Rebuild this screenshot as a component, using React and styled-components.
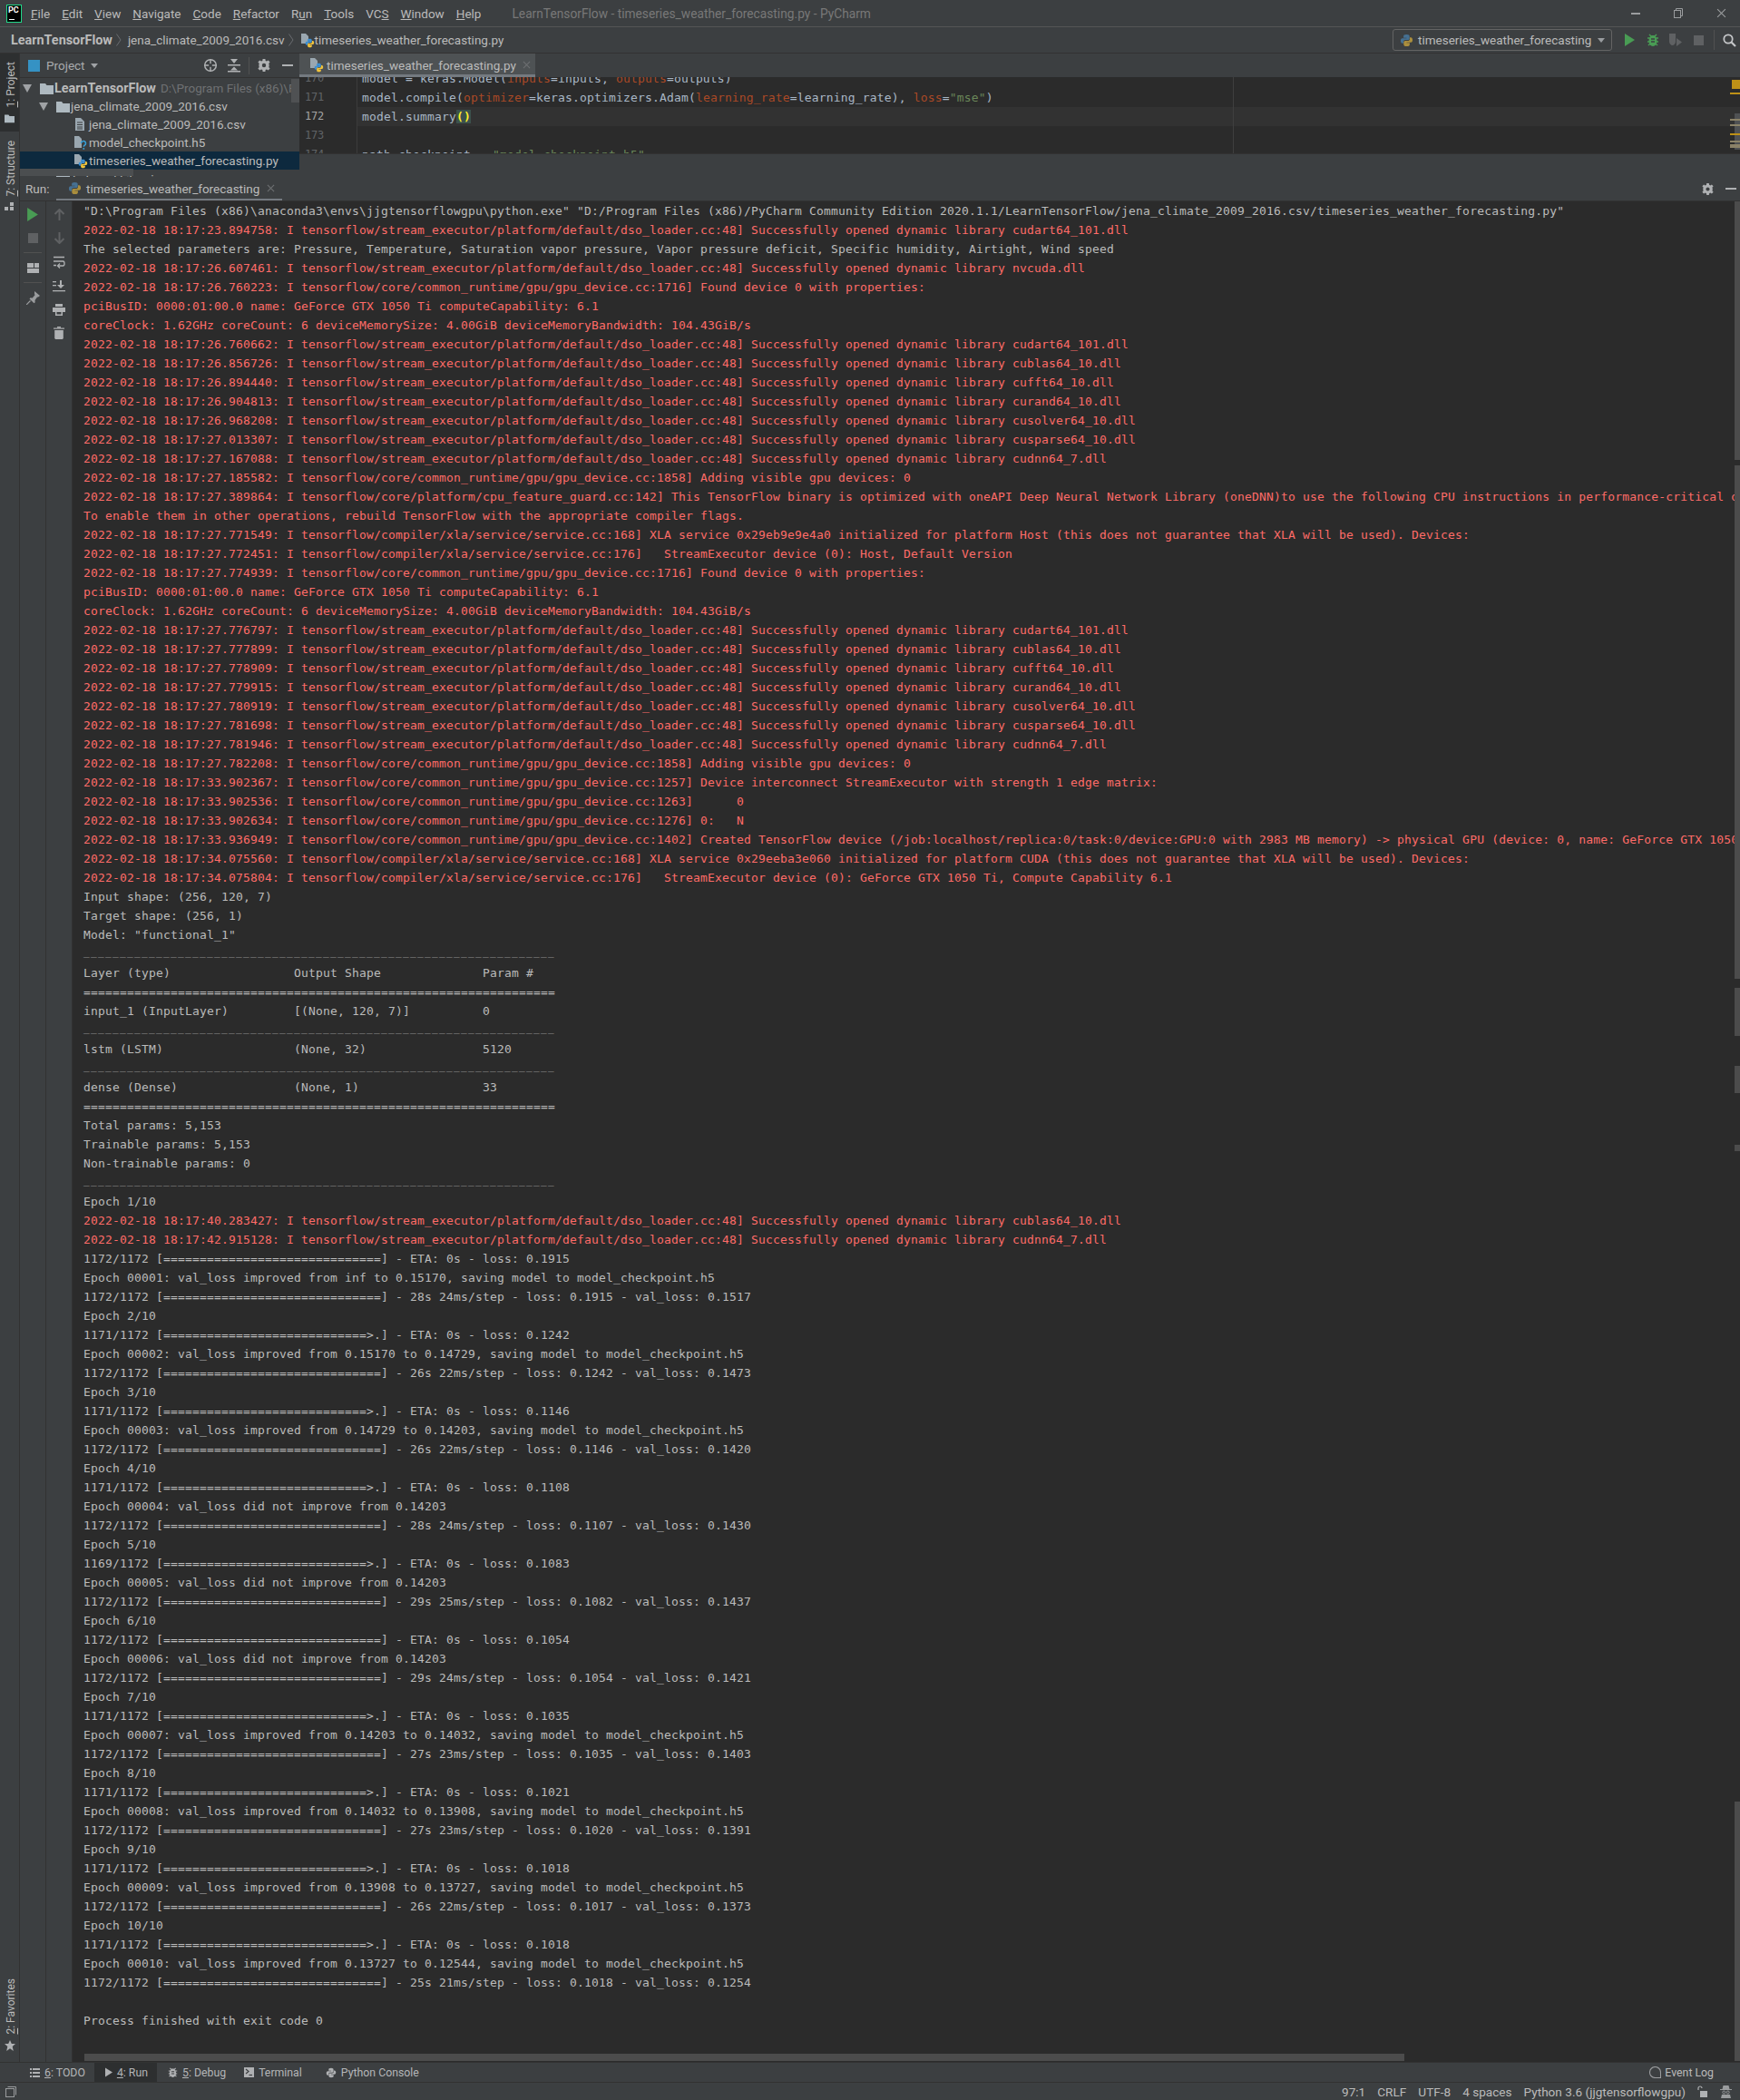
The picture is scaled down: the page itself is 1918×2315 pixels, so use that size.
import React from 'react';
import styled, { createGlobalStyle } from 'styled-components';

const Global = createGlobalStyle`
  html, body { margin: 0; padding: 0; background: #3c3f41; }
  #root { width: 1918px; height: 2315px; }
`;

const UI = `"Roboto", "Noto Sans", sans-serif`;
const MONO = `"DejaVu Sans Mono", "Liberation Mono", monospace`;

const Root = styled.div`
  width: 1918px; height: 2315px; overflow: hidden;
  display: flex; flex-direction: column;
  background: #3c3f41; color: #bbbbbb;
  font-family: ${UI}; font-size: 13px;
`;
const TitleBar = styled.div`
  height: 29px; flex: none; display: flex; align-items: center;
  padding-left: 7px; border-bottom: 1px solid #555555;
`;
const Logo = styled.div`
  height: 18px; flex: none; background: #000; border: 1px solid #21d789;
  color: #fff; font-size: 9px; font-weight: 700; line-height: 10px; padding-left: 1px;
  box-sizing: content-box; position: relative; margin-right: 10px; width: 14px;
  &::after { content: ''; position: absolute; left: 2px; bottom: 2px; width: 6px; height: 1px; background: #fff; }
`;
const Menu = styled.nav`display: flex; gap: 13px; color: #bbbbbb; font-size: 13.5px;`;
const TitleText = styled.div`margin-left: 34px; color: #787878; font-size: 13.75px;`;
const WinButtons = styled.div`margin-left: auto; display: flex; gap: 37px; padding-right: 15px; align-items: center;`;

const NavBar = styled.div`
  height: 28px; flex: none; display: flex; align-items: center; padding-left: 12px;
  border-bottom: 1px solid #323232; font-size: 13.5px;
`;
const Crumb = styled.span`
  font-weight: ${p => (p.$bold ? 700 : 400)}; font-size: ${p => (p.$bold ? '14.4px' : 'inherit')}; white-space: pre;
`;
const CrumbSep = styled.span`color: #6a6d70; margin: 0 7px 0 4px; display: inline-flex;`;
const NavRight = styled.div`margin-left: auto; display: flex; align-items: center; padding-right: 4px;`;
const Combo = styled.div`
  width: 242px; height: 24px; box-sizing: border-box; display: flex; align-items: center;
  gap: 5px; padding: 0 7px; border: 1px solid #646464; border-radius: 3px; margin-right: 6px;
`;
const ComboArrow = styled.span`
  margin-left: auto; width: 0; height: 0; border-left: 4.5px solid transparent;
  border-right: 4.5px solid transparent; border-top: 5px solid #9a9da0;
`;
const NavDivider = styled.span`width: 1px; height: 22px; background: #515151; margin: 0 8px 0 3px;`;
const NavIcon = styled.span`display: inline-flex; width: ${p => p.$w || 26}px; justify-content: center;`;

const Middle = styled.div`flex: 1; min-height: 0; display: flex;`;
const Strip = styled.aside`
  width: 21px; flex: none; border-right: 1px solid #323232; display: flex; flex-direction: column;
  font-size: 12px;
`;
const StripTab = styled.div`
  display: flex; flex-direction: column; align-items: center; gap: ${p => p.$gap || 6}px;
  padding: ${p => p.$pad || '9px 0 0'};
  height: ${p => p.$height || 'auto'}; box-sizing: border-box;
  background: ${p => (p.$active ? '#2d2f30' : 'transparent')};
  margin-top: ${p => p.$mt || '0'};
`;
const StripLabel = styled.span`
  writing-mode: vertical-rl; transform: rotate(180deg); white-space: pre; line-height: 17px; color: #bbbbbb;
  margin-left: 3px;
`;
const Main = styled.div`flex: 1; min-width: 0; display: flex; flex-direction: column;`;
const TopArea = styled.div`height: 136px; flex: none; display: flex;`;

const ProjectPanel = styled.section`width: 308px; flex: none; display: flex; flex-direction: column; overflow: hidden; position: relative;`;
const PanelHeader = styled.div`
  height: 26px; flex: none; display: flex; align-items: center; padding-left: 9px;
  border-bottom: 1px solid #323232; box-sizing: content-box;
`;
const PanelTitle = styled.span`margin: 0 6px 0 7px; font-size: 13.5px; color: #a9abad;`;
const SmallDown = styled.span`
  width: 0; height: 0; border-left: 4px solid transparent; border-right: 4px solid transparent;
  border-top: 5px solid #a0a3a6;
`;
const HeaderIcons = styled.div`margin-left: auto; display: flex; align-items: center; padding-right: 0;`;
const HeaderIcon = styled.span`display: inline-flex; width: ${p => p.$w || 26}px; justify-content: center;`;
const VDivider = styled.span`width: 1px; height: 19px; background: #515151; margin: 0 3px;`;
const Tree = styled.div`flex: 1; padding-top: 1px; position: relative; overflow: hidden;`;
const TreeRow = styled.div`
  height: 20px; display: flex; align-items: center; white-space: pre; overflow: hidden;
  padding-left: ${p => p.$indent}px; background: ${p => (p.$selected ? '#0d293e' : 'transparent')};
  gap: ${p => p.$gap ?? 3}px; font-size: 13.5px;
`;
const Chevron = styled.span`
  width: 0; height: 0; border-left: 5px solid transparent; border-right: 5px solid transparent;
  border-top: 9px solid #9fa2a5; margin-right: 8px; flex: none;
`;
const Dim = styled.span`color: #6f7173; margin-left: 4px;`;
const TreeVScroll = styled.div`position: absolute; right: 0; top: 1px; width: 9px; height: 26px; background: #4f5153;`;
const TreeHScroll = styled.div`position: absolute; left: 0; top: 100px; width: 125px; height: 8px; background: #4b4e50;`;

const EditorPane = styled.section`flex: 1; min-width: 0; display: flex; flex-direction: column;`;
const TabBar = styled.div`height: 26px; flex: none; display: flex;`;
const EditorTab = styled.div`
  width: 260px; height: 26px; box-sizing: border-box; background: #4e5254; border-bottom: 3px solid #747a80;
  display: flex; align-items: center; gap: 3px; padding: 2px 0 0 11px; font-size: 13.5px;
`;
const CloseX = styled.span`color: #6d7072; margin-left: ${p => p.$ml || 4}px; display: inline-flex;`;
const Editor = styled.div`
  height: 84px; flex: none; background: #2b2b2b; border-bottom: 1px solid #323232; overflow: hidden;
  position: relative; font-family: ${MONO}; font-size: 13px; letter-spacing: 0.17px;
  display: flex; box-sizing: content-box;
`;
const Gutter = styled.div`
  width: 64px; flex: none; border-right: 1px solid #3b3b3b; box-sizing: border-box;
  padding: 0 0 0 6px; margin-top: -9px; background: #2b2b2b; color: #606366;
  font-size: 12px; letter-spacing: -0.2px;
`;
const GutterNum = styled.div`height: 21px; line-height: 21px; color: ${p => (p.$cur ? '#a4a3a3' : '#606366')};`;
const CodeCol = styled.div`flex: 1; margin-top: -9px; padding-left: 0; min-width: 0; color: #a9b7c6;`;
const CodeLine = styled.div`
  height: 21px; line-height: 21px; white-space: pre; padding-left: 5px;
  background: ${p => (p.$cur ? '#323232' : 'transparent')};
`;
const Kw = styled.span`color: #aa4926;`;
const Str = styled.span`color: #6a8759;`;
const Paren = styled.span`color: #ffef28; background: #3b514d; font-weight: 700;`;
const MarginLine = styled.div`position: absolute; left: 1029px; top: 0; bottom: 0; width: 1px; background: #3f3f3f;`;
const Stripe = styled.div`
  position: absolute; right: 0; top: ${p => p.$t}px; width: ${p => p.$w}px; height: ${p => p.$h}px; background: ${p => p.$c};
`;
const EditorFooter = styled.div`flex: 1;`;

const RunPanel = styled.section`flex: 1; min-height: 0; display: flex; flex-direction: column;`;
const RunHeader = styled.div`
  height: 26px; flex: none; display: flex; align-items: center; padding-left: 6px;
  border-bottom: 1px solid #323232; box-sizing: content-box;
`;
const RunLabel = styled.span`width: 34px; font-size: 13.5px;`;
const RunTab = styled.div`
  width: 249px; height: 26px; box-sizing: border-box; border-bottom: 2px solid #747a80;
  display: flex; align-items: center; gap: 5px; padding: 1px 0 0 13px; font-size: 13.5px;
`;
const RunHeaderRight = styled.div`margin-left: auto; display: flex; align-items: center; gap: 13px; padding-right: 4px;`;
const RunBody = styled.div`flex: 1; min-height: 0; display: flex;`;
const ToolCol = styled.div`
  width: ${p => p.$w}px; flex: none; box-sizing: border-box; border-right: 1px solid #323232;
  display: flex; flex-direction: column; align-items: center; padding-top: 1px;
`;
const Slot = styled.div`
  height: ${p => p.$h || 26}px; width: 100%; display: flex; align-items: center; justify-content: center; flex: none;
  margin-top: ${p => p.$mt || 0}px;
`;
const ToolSep = styled.div`width: 20px; height: 1px; background: #515151; margin-top: ${p => p.$mt || 0}px; flex: none;`;
const Console = styled.div`
  flex: 1; min-width: 0; background: #2b2b2b; position: relative; overflow: hidden;
  font-family: ${MONO}; font-size: 13px; letter-spacing: 0.174px; padding: 0 0 0 12px;
`;
const Line = styled.div`
  height: 21px; line-height: 21px; white-space: pre;
  color: ${p => (p.$err ? '#ff6b68' : '#bbbbbb')};
`;
const RuleLine = styled(Line)`
  font-size: 11px; letter-spacing: 1.378px; line-height: 18px; color: #a4a4a4;
`;
const VBar = styled.div`
  position: absolute; right: 0; width: 6px; background: #4c4c4c;
  top: ${p => p.$t}px; height: ${p => p.$h}px;
`;
const HBar = styled.div`position: absolute; left: 13px; bottom: 1px; width: 1455px; height: 8px; background: #4c4c4c;`;

const BottomBar = styled.div`
  height: 21px; flex: none; display: flex; align-items: stretch; padding-left: 30px;
  border-top: 1px solid #323232; font-size: 12.3px; box-sizing: content-box;
`;
const BottomTab = styled.div`
  display: flex; align-items: center; gap: 5px; padding: 0 ${p => p.$pr ?? 10}px 0 ${p => p.$pl ?? 3}px; white-space: pre;
  background: ${p => (p.$active ? '#2d2f30' : 'transparent')};
  color: #b4b6b8;
`;
const EventLog = styled.div`margin-left: auto; display: flex; align-items: center; gap: 4px; padding-right: 29px;`;
const StatusBar = styled.footer`
  height: 20px; flex: none; display: flex; align-items: center; padding-left: 6px;
  border-top: 1px solid #323232; box-sizing: border-box; font-size: 13.6px;
`;
const StatusRight = styled.div`margin-left: auto; display: flex; align-items: center; gap: 13px; padding-right: 9px; white-space: pre;`;

/* Icons */
const Py = ({ s = 14, dim }) => (
  <svg width={s} height={s} viewBox="0 0 16 16" style={{ flex: 'none', opacity: dim ? 0.65 : 1 }}>
    <path d="M8 1c-3 0-3.6 1-3.6 2.3V5H8v.6H3C1.6 5.6 1 7 1 8.6s.8 2.9 2 2.9h1.300V9.700c0-1.300 1-2.200 2.300-2.200h2.900c1.100 0 1.900-.8 1.900-1.900V3.300C11.400 2 10.600 1 8 1z" fill="#4b8bbe" />
    <path d="M8 15c3 0 3.600-1 3.600-2.300V11H8v-.6h5c1.400 0 2-1.400 2-3s-.8-2.900-2-2.900h-1.300v1.800c0 1.300-1 2.200-2.300 2.200H6.500c-1.100 0-1.900.8-1.900 1.900v2.300C4.600 14 5.400 15 8 15z" fill="#e6b93c" />
  </svg>
);
const PyFile = () => (
  <svg width="16" height="17" viewBox="0 0 16 17" style={{ flex: 'none' }}>
    <path d="M1 1h5l3 3v8H1z" fill="#9aa7b0" />
    <g transform="translate(5 6) scale(.68)">
      <path d="M8 1c-3 0-3.600 1-3.600 2.300V5H8v.6H3C1.600 5.600 1 7 1 8.600s.8 2.900 2 2.900h1.300V9.700c0-1.300 1-2.200 2.300-2.200h2.900c1.100 0 1.900-.8 1.900-1.900V3.300C11.400 2 10.600 1 8 1z" fill="#3d8fd1" />
      <path d="M8 15c3 0 3.600-1 3.600-2.300V11H8v-.6h5c1.400 0 2-1.400 2-3s-.8-2.900-2-2.900h-1.300v1.800c0 1.300-1 2.200-2.300 2.200H6.500c-1.100 0-1.900.8-1.900 1.900v2.300C4.600 14 5.400 15 8 15z" fill="#f0c33c" />
    </g>
  </svg>
);
const UnknownFile = () => (
  <svg width="16" height="17" viewBox="0 0 16 17" style={{ flex: 'none' }}>
    <path d="M1 1h5l3 3v10H1z" fill="#9aa7b0" />
    <path d="M8.500 9a2.500 2.500 0 1 1 3.800 2.100c-.7.500-1 .8-1 1.600" fill="none" stroke="#389fd6" strokeWidth="1.600" />
    <rect x="10.500" y="14" width="1.600" height="1.800" fill="#389fd6" />
  </svg>
);
const TextFile = () => (
  <svg width="14" height="16" viewBox="0 0 14 16" style={{ flex: 'none' }}>
    <path d="M2 1h6l4 4v10H2z" fill="#9aa7b0" />
    <path d="M4 6h6M4 8.500h6M4 11h6M4 13h6" stroke="#3c3f41" strokeWidth="1" />
  </svg>
);
const Folder = ({ w = 15 }) => (
  <svg width={w} height="13" viewBox="0 0 15 13" style={{ flex: 'none' }}>
    <path d="M0 1h6l1.500 2H15v10H0z" fill="#aeb9c0" />
  </svg>
);
const Gear = ({ s = 14, c = '#afb1b3' }) => (
  <svg width={s} height={s} viewBox="0 0 14 14">
    <path d="M5.600 0h2.800l.3 2 1.300.6L11.700 1.500 13.600 3.600 12.200 5.100 12.600 6v2l-.4.900 1.400 1.500-1.900 2.100-1.700-1.100-1.300.6-.3 2H5.600l-.3-2-1.300-.6-1.700 1.100L.4 10.400l1.400-1.500L1.400 8V6l.4-.9L.4 3.600l1.900-2.100L4 2.600 5.300 2z" fill={c} />
    <circle cx="7" cy="7" r="2.200" fill="#3c3f41" />
  </svg>
);
const Dash = ({ w = 12, c = '#afb1b3' }) => <svg width={w} height="2" viewBox={`0 0 ${w} 2`}><rect width={w} height="2" fill={c} /></svg>;
const Target = () => (
  <svg width="16" height="16" viewBox="0 0 16 16">
    <circle cx="8" cy="8" r="6.300" fill="none" stroke="#afb1b3" strokeWidth="1.500" />
    <path d="M8 1v14M1 8h14" stroke="#afb1b3" strokeWidth="1.400" />
    <circle cx="8" cy="8" r="2" fill="#3c3f41" />
  </svg>
);
const Collapse = () => (
  <svg width="14" height="16" viewBox="0 0 14 16" fill="#afb1b3">
    <rect x="0" y="7" width="14" height="1.500" />
    <rect x="0" y="14" width="14" height="1.500" />
    <path d="M7 6 3 1h8zM7 9.500l-4 4h8z" />
  </svg>
);
const Close = ({ s = 9, c = 'currentColor', w = 1.200 }) => (
  <svg width={s} height={s} viewBox="0 0 10 10"><path d="M1 1l8 8M9 1l-8 8" stroke={c} strokeWidth={w} /></svg>
);
const Play = ({ w = 11, h = 14, c = '#499c54' }) => <svg width={w} height={h} viewBox="0 0 11 14"><path d="M0 0l11 7-11 7z" fill={c} /></svg>;
const Bug = ({ c = '#499c54', s = 14 }) => (
  <svg width={s} height={s + 2} viewBox="0 0 14 16">
    <path d="M3 2l2 2h4l2-2M1 6h3M1 10h3M13 6h-3M13 10h-3M2 14l2-2M12 14l-2-2" stroke={c} strokeWidth="1.400" fill="none" />
    <ellipse cx="7" cy="9" rx="4.500" ry="6" fill={c} />
    <path d="M5 7h4M5 10h4" stroke="#3c3f41" strokeWidth="1.300" />
  </svg>
);
const Coverage = () => (
  <svg width="16" height="16" viewBox="0 0 16 16">
    <path d="M1 1h7v9c0 2-2 4-3.500 4S1 12 1 10z" fill="#5f6163" />
    <path d="M9 6l6 4.500L9 15z" fill="#5f6163" />
  </svg>
);
const Square = ({ s = 11, c = '#5f6163' }) => <svg width={s} height={s}><rect width={s} height={s} fill={c} /></svg>;
const Search = () => (
  <svg width="15" height="15" viewBox="0 0 15 15">
    <circle cx="6" cy="6" r="4.700" fill="none" stroke="#c4c6c8" strokeWidth="1.800" />
    <path d="M9.500 9.500l4.500 4.500" stroke="#c4c6c8" strokeWidth="2.200" />
  </svg>
);
const Restore = () => (
  <svg width="10" height="11" viewBox="0 0 10 11" fill="none" stroke="#9a9c9e">
    <rect x=".5" y="2.500" width="7" height="8" />
    <path d="M2.500 2.500V.5h7v8h-2" />
  </svg>
);
const Arrow = ({ down }) => (
  <svg width="13" height="13" viewBox="0 0 13 13" style={{ transform: down ? 'rotate(180deg)' : 'none' }}>
    <path d="M6.500 1v12M1.500 6l5-5 5 5" fill="none" stroke="#5f6163" strokeWidth="2" />
  </svg>
);
const LayoutIcon = () => (
  <svg width="13" height="11" viewBox="0 0 13 11" fill="#afb1b3">
    <rect x="0" y="0" width="7" height="5" /><rect x="8" y="0" width="5" height="5" /><rect x="0" y="6" width="13" height="5" />
  </svg>
);
const Pin = () => (
  <svg width="15" height="15" viewBox="0 0 15 15">
    <path d="M9 0l6 5-2 1.500-1 0-2.500 3.500.2 2.200-1.200 1L3.500 8.500l1-1.200 2.200.2L9.500 4.300 9 3z" fill="#9a9c9e" />
    <path d="M4.500 10.500L0 15" stroke="#9a9c9e" strokeWidth="1.200" />
  </svg>
);
const Wrap = () => (
  <svg width="14" height="14" viewBox="0 0 14 14" fill="none" stroke="#afb1b3" strokeWidth="1.300">
    <path d="M1 1.500h12M1 6h10.500c2 0 2 5 0 5H6M1 10.500h3" />
    <path d="M8 8.500 5.500 11 8 13.500" />
  </svg>
);
const ScrollEnd = () => (
  <svg width="14" height="13" viewBox="0 0 14 13" fill="#afb1b3">
    <rect x="0" y="1" width="4" height="1.300" /><rect x="0" y="5" width="4" height="1.300" />
    <rect x="0" y="11" width="14" height="1.300" />
    <path d="M8 0h2v5h3l-4 4-4-4h3z" />
  </svg>
);
const Printer = () => (
  <svg width="14" height="13" viewBox="0 0 14 13" fill="#afb1b3">
    <rect x="3" y="0" width="8" height="3" /><rect x="0" y="4" width="14" height="5" />
    <path d="M3 7h8v6H3zM4.500 8.500v3h5v-3z" fillRule="evenodd" />
  </svg>
);
const Trash = () => (
  <svg width="12" height="14" viewBox="0 0 12 14" fill="#afb1b3">
    <rect x="0" y="1.500" width="12" height="1.200" /><rect x="4" y="0" width="4" height="1.500" />
    <path d="M1.200 4h9.600v9l-1 1H2.200l-1-1z" />
  </svg>
);
const ListIcon = () => (
  <svg width="11" height="10" viewBox="0 0 11 10" fill="#afb1b3">
    <path d="M0 0h2v2H0zM3 0h8v2H3zM0 4h2v2H0zM3 4h8v2H3zM0 8h2v2H0zM3 8h8v2H3z" />
  </svg>
);
const TermIcon = () => (
  <svg width="11" height="11" viewBox="0 0 11 11">
    <rect width="11" height="11" fill="#afb1b3" />
    <path d="M2 2l3 2.500L2 7" stroke="#3c3f41" strokeWidth="1.200" fill="none" /><path d="M5.500 8.500H9" stroke="#3c3f41" strokeWidth="1.200" />
  </svg>
);
const PyGray = () => (
  <svg width="12" height="12" viewBox="0 0 16 16" fill="#afb1b3">
    <path d="M8 1c-3 0-3.600 1-3.600 2.300V5H8v.6H3C1.600 5.600 1 7 1 8.600s.8 2.900 2 2.900h1.300V9.700c0-1.300 1-2.200 2.300-2.200h2.900c1.100 0 1.900-.8 1.900-1.900V3.300C11.400 2 10.600 1 8 1z" />
    <path d="M8 15c3 0 3.600-1 3.600-2.300V11H8v-.6h5c1.400 0 2-1.400 2-3s-.8-2.900-2-2.900h-1.300v1.800c0 1.300-1 2.200-2.300 2.200H6.500c-1.100 0-1.900.8-1.900 1.900v2.300C4.600 14 5.400 15 8 15z" />
  </svg>
);
const Balloon = () => (
  <svg width="13" height="13" viewBox="0 0 13 13" fill="none" stroke="#9a9c9e" strokeWidth="1.100">
    <path d="M12.500 12.500H6.500a6 6 0 1 1 6-6z" />
  </svg>
);
const Lock = () => (
  <svg width="12" height="13" viewBox="0 0 12 13">
    <path d="M1 5V3a2 2 0 0 1 4 0" stroke="#afb1b3" strokeWidth="1.200" fill="none" />
    <rect x="3" y="6" width="8" height="7" fill="#afb1b3" />
  </svg>
);
const Hector = () => (
  <svg width="13" height="14" viewBox="0 0 13 14" fill="#9a9c9e">
    <path d="M3.500 0h6l1 4h2.500v1H0V4h2.500z" />
    <circle cx="4.300" cy="7.500" r="1.500" fill="none" stroke="#9a9c9e" /><circle cx="8.700" cy="7.500" r="1.500" fill="none" stroke="#9a9c9e" />
    <path d="M2 10h9l1 4H1z" />
  </svg>
);
const SquareOutline = () => (
  <svg width="12" height="12" viewBox="0 0 12 12" fill="none" stroke="#9a9c9e">
    <path d="M2.500 .5h9v9" /><rect x=".5" y="2.500" width="9" height="9" />
  </svg>
);
const CrumbChevron = () => (
  <svg width="6" height="14" viewBox="0 0 6 14"><path d="M.5 .5 5 7 .5 13.500" fill="none" stroke="#6a6d70" /></svg>
);
const StarIcon = () => (
  <svg width="12" height="12" viewBox="0 0 12 12"><path d="M6 0l1.800 4H12L8.700 7l1.100 5L6 9.300 2.200 12l1.100-5L0 4h4.200z" fill="#afb1b3" /></svg>
);
const StructIcon = () => (
  <svg width="11" height="10" viewBox="0 0 11 10" fill="#afb1b3">
    <rect x="6" y="0" width="4" height="4" /><rect x="0" y="5" width="4" height="4" /><rect x="6" y="5" width="4" height="4" />
  </svg>
);

/* Console content */
const T = '2022-02-18 18:17:';
const DSO = 'I tensorflow/stream_executor/platform/default/dso_loader.cc:48] Successfully opened dynamic library ';
const GPU = 'I tensorflow/core/common_runtime/gpu/gpu_device.cc:';
const XLA = 'I tensorflow/compiler/xla/service/service.cc:';
const dso = (t, lib) => ({ err: true, text: `${T}${t}: ${DSO}${lib}` });
const gpu = (t, rest) => ({ err: true, text: `${T}${t}: ${GPU}${rest}` });
const xla = (t, rest) => ({ err: true, text: `${T}${t}: ${XLA}${rest}` });
const e = text => ({ err: true, text });
const n = text => ({ err: false, text });
const PCI = 'pciBusID: 0000:01:00.0 name: GeForce GTX 1050 Ti computeCapability: 6.1';
const CLK = 'coreClock: 1.62GHz coreCount: 6 deviceMemorySize: 4.00GiB deviceMemoryBandwidth: 104.43GiB/s';
const US = { rule: true, text: '_'.repeat(65) };
const EQ = '='.repeat(65);
const FULL = `1172/1172 [${'='.repeat(30)}]`;
const ALMOST = c => `${c}/1172 [${'='.repeat(28)}>.]`;
const eta = (bar, l) => n(`${bar} - ETA: 0s - loss: ${l}`);
const done = (s, ms, l, v) => n(`${FULL} - ${s}s ${ms}ms/step - loss: ${l} - val_loss: ${v}`);
const epochId = i => `Epoch ${String(i).padStart(5, '0')}`;
const better = (i, a, b) => n(`${epochId(i)}: val_loss improved from ${a} to ${b}, saving model to model_checkpoint.h5`);
const same = (i, a) => n(`${epochId(i)}: val_loss did not improve from ${a}`);

const LINES = [
  n('"D:\\Program Files (x86)\\anaconda3\\envs\\jjgtensorflowgpu\\python.exe" "D:/Program Files (x86)/PyCharm Community Edition 2020.1.1/LearnTensorFlow/jena_climate_2009_2016.csv/timeseries_weather_forecasting.py"'),
  dso('23.894758', 'cudart64_101.dll'),
  n('The selected parameters are: Pressure, Temperature, Saturation vapor pressure, Vapor pressure deficit, Specific humidity, Airtight, Wind speed'),
  dso('26.607461', 'nvcuda.dll'),
  gpu('26.760223', '1716] Found device 0 with properties: '),
  e(PCI), e(CLK),
  dso('26.760662', 'cudart64_101.dll'),
  dso('26.856726', 'cublas64_10.dll'),
  dso('26.894440', 'cufft64_10.dll'),
  dso('26.904813', 'curand64_10.dll'),
  dso('26.968208', 'cusolver64_10.dll'),
  dso('27.013307', 'cusparse64_10.dll'),
  dso('27.167088', 'cudnn64_7.dll'),
  gpu('27.185582', '1858] Adding visible gpu devices: 0'),
  e(`${T}27.389864: I tensorflow/core/platform/cpu_feature_guard.cc:142] This TensorFlow binary is optimized with oneAPI Deep Neural Network Library (oneDNN)to use the following CPU instructions in performance-critical operations:  AVX2`),
  e('To enable them in other operations, rebuild TensorFlow with the appropriate compiler flags.'),
  xla('27.771549', '168] XLA service 0x29eb9e9e4a0 initialized for platform Host (this does not guarantee that XLA will be used). Devices:'),
  xla('27.772451', '176]   StreamExecutor device (0): Host, Default Version'),
  gpu('27.774939', '1716] Found device 0 with properties: '),
  e(PCI), e(CLK),
  dso('27.776797', 'cudart64_101.dll'),
  dso('27.777899', 'cublas64_10.dll'),
  dso('27.778909', 'cufft64_10.dll'),
  dso('27.779915', 'curand64_10.dll'),
  dso('27.780919', 'cusolver64_10.dll'),
  dso('27.781698', 'cusparse64_10.dll'),
  dso('27.781946', 'cudnn64_7.dll'),
  gpu('27.782208', '1858] Adding visible gpu devices: 0'),
  gpu('33.902367', '1257] Device interconnect StreamExecutor with strength 1 edge matrix:'),
  gpu('33.902536', '1263]      0 '),
  gpu('33.902634', '1276] 0:   N '),
  gpu('33.936949', '1402] Created TensorFlow device (/job:localhost/replica:0/task:0/device:GPU:0 with 2983 MB memory) -> physical GPU (device: 0, name: GeForce GTX 1050 Ti, pci bus id: 0000:01:00.0, compute capability: 6.1)'),
  xla('34.075560', '168] XLA service 0x29eeba3e060 initialized for platform CUDA (this does not guarantee that XLA will be used). Devices:'),
  xla('34.075804', '176]   StreamExecutor device (0): GeForce GTX 1050 Ti, Compute Capability 6.1'),
  n('Input shape: (256, 120, 7)'),
  n('Target shape: (256, 1)'),
  n('Model: "functional_1"'),
  US,
  n('Layer (type)                 Output Shape              Param #   '),
  n(EQ),
  n('input_1 (InputLayer)         [(None, 120, 7)]          0         '),
  US,
  n('lstm (LSTM)                  (None, 32)                5120      '),
  US,
  n('dense (Dense)                (None, 1)                 33        '),
  n(EQ),
  n('Total params: 5,153'),
  n('Trainable params: 5,153'),
  n('Non-trainable params: 0'),
  US,
  n('Epoch 1/10'),
  dso('40.283427', 'cublas64_10.dll'),
  dso('42.915128', 'cudnn64_7.dll'),
  eta(FULL, '0.1915'),
  better(1, 'inf', '0.15170'),
  done(28, 24, '0.1915', '0.1517'),
  n('Epoch 2/10'),
  eta(ALMOST(1171), '0.1242'),
  better(2, '0.15170', '0.14729'),
  done(26, 22, '0.1242', '0.1473'),
  n('Epoch 3/10'),
  eta(ALMOST(1171), '0.1146'),
  better(3, '0.14729', '0.14203'),
  done(26, 22, '0.1146', '0.1420'),
  n('Epoch 4/10'),
  eta(ALMOST(1171), '0.1108'),
  same(4, '0.14203'),
  done(28, 24, '0.1107', '0.1430'),
  n('Epoch 5/10'),
  eta(ALMOST(1169), '0.1083'),
  same(5, '0.14203'),
  done(29, 25, '0.1082', '0.1437'),
  n('Epoch 6/10'),
  eta(FULL, '0.1054'),
  same(6, '0.14203'),
  done(29, 24, '0.1054', '0.1421'),
  n('Epoch 7/10'),
  eta(ALMOST(1171), '0.1035'),
  better(7, '0.14203', '0.14032'),
  done(27, 23, '0.1035', '0.1403'),
  n('Epoch 8/10'),
  eta(ALMOST(1171), '0.1021'),
  better(8, '0.14032', '0.13908'),
  done(27, 23, '0.1020', '0.1391'),
  n('Epoch 9/10'),
  eta(ALMOST(1171), '0.1018'),
  better(9, '0.13908', '0.13727'),
  done(26, 22, '0.1017', '0.1373'),
  n('Epoch 10/10'),
  eta(ALMOST(1171), '0.1018'),
  better(10, '0.13727', '0.12544'),
  done(25, 21, '0.1018', '0.1254'),
  n(' '),
  n('Process finished with exit code 0'),
];

const MENU = [['F', 'ile'], ['E', 'dit'], ['V', 'iew'], ['N', 'avigate'], ['C', 'ode'], ['R', 'efactor'], ['R', 'un', 1], ['T', 'ools'], ['VC', 'S', 2], ['W', 'indow'], ['H', 'elp']];
const CONSOLE_BARS = [[0, 285], [291, 566], [867, 53], [953, 30], [1040, 7], [1764, 286]];

export default function App() {
  return (
    <Root>
      <Global />
      <TitleBar>
        <Logo>PC</Logo>
        <Menu>
          {MENU.map(([a, b, k], i) => (
            <span key={i}>
              {k === 1 ? <>R<u>u</u>n</> : k === 2 ? <>VC<u>S</u></> : <><u>{a}</u>{b}</>}
            </span>
          ))}
        </Menu>
        <TitleText>LearnTensorFlow - timeseries_weather_forecasting.py - PyCharm</TitleText>
        <WinButtons>
          <Dash w={10} c="#9a9c9e" />
          <Restore />
          <Close s={11} c="#9a9c9e" w={1} />
        </WinButtons>
      </TitleBar>
      <NavBar>
        <Crumb $bold>LearnTensorFlow</Crumb>
        <CrumbSep><CrumbChevron /></CrumbSep>
        <Crumb>jena_climate_2009_2016.csv</Crumb>
        <CrumbSep><CrumbChevron /></CrumbSep>
        <PyFile />
        <Crumb>timeseries_weather_forecasting.py</Crumb>
        <NavRight>
          <Combo>
            <Py s={15} dim />
            <span>timeseries_weather_forecasting</span>
            <ComboArrow />
          </Combo>
          <NavIcon $w={26}><Play /></NavIcon>
          <NavIcon $w={25}><Bug /></NavIcon>
          <NavIcon $w={25}><Coverage /></NavIcon>
          <NavIcon $w={27}><Square /></NavIcon>
          <NavDivider />
          <NavIcon $w={16}><Search /></NavIcon>
        </NavRight>
      </NavBar>
      <Middle>
        <Strip>
          <StripTab $active $height="86px">
            <StripLabel><u>1</u>: Project</StripLabel>
            <Folder w={11} />
          </StripTab>
          <StripTab $pad="10px 0 0">
            <StripLabel><u>7</u>: Structure</StripLabel>
            <StructIcon />
          </StripTab>
          <StripTab $mt="auto" $pad="0 0 12px">
            <StripLabel><u>2</u>: Favorites</StripLabel>
            <StarIcon />
          </StripTab>
        </Strip>
        <Main>
          <TopArea>
            <ProjectPanel>
              <PanelHeader>
                <Square s={13} c="#3592c4" />
                <PanelTitle>Project</PanelTitle>
                <SmallDown />
                <HeaderIcons>
                  <HeaderIcon><Target /></HeaderIcon>
                  <HeaderIcon><Collapse /></HeaderIcon>
                  <VDivider />
                  <HeaderIcon><Gear /></HeaderIcon>
                  <HeaderIcon><Dash w={12} /></HeaderIcon>
                </HeaderIcons>
              </PanelHeader>
              <Tree>
                <TreeRow $indent={3} $gap={1}>
                  <Chevron /><Folder /><Crumb $bold>LearnTensorFlow</Crumb><Dim>D:\Program Files (x86)\P</Dim>
                </TreeRow>
                <TreeRow $indent={21} $gap={1}>
                  <Chevron /><Folder /><Crumb>jena_climate_2009_2016.csv</Crumb>
                </TreeRow>
                <TreeRow $indent={59} $gap={3}><TextFile /><Crumb>jena_climate_2009_2016.csv</Crumb></TreeRow>
                <TreeRow $indent={59} $gap={1}><UnknownFile /><Crumb>model_checkpoint.h5</Crumb></TreeRow>
                <TreeRow $indent={59} $gap={1} $selected><PyFile /><Crumb>timeseries_weather_forecasting.py</Crumb></TreeRow>
                <TreeRow $indent={40} $gap={3}><Folder /><Crumb>External Libraries</Crumb></TreeRow>
                <TreeVScroll />
                <TreeHScroll />
              </Tree>
            </ProjectPanel>
            <EditorPane>
              <TabBar>
                <EditorTab>
                  <PyFile />
                  <span>timeseries_weather_forecasting.py</span>
                  <CloseX><Close s={9} /></CloseX>
                </EditorTab>
              </TabBar>
              <Editor>
                <Gutter>
                  <GutterNum>170</GutterNum>
                  <GutterNum>171</GutterNum>
                  <GutterNum $cur>172</GutterNum>
                  <GutterNum>173</GutterNum>
                  <GutterNum>174</GutterNum>
                </Gutter>
                <CodeCol>
                  <CodeLine>model = keras.Model(<Kw>inputs</Kw>=inputs, <Kw>outputs</Kw>=outputs)</CodeLine>
                  <CodeLine>model.compile(<Kw>optimizer</Kw>=keras.optimizers.Adam(<Kw>learning_rate</Kw>=learning_rate), <Kw>loss</Kw>=<Str>"mse"</Str>)</CodeLine>
                  <CodeLine $cur>model.summary<Paren>()</Paren></CodeLine>
                  <CodeLine> </CodeLine>
                  <CodeLine>path_checkpoint = <Str>"model_checkpoint.h5"</Str></CodeLine>
                </CodeCol>
                <MarginLine />
                <Stripe $t={3} $w={9} $h={10} $c="#be9117" />
                <Stripe $t={17} $w={11} $h={2} $c="#be9117" />
                <Stripe $t={40} $w={6} $h={40} $c="#4f5153" />
                <Stripe $t={46} $w={11} $h={2} $c="#8b8268" />
                <Stripe $t={52} $w={11} $h={2} $c="#8b8268" />
                <Stripe $t={62} $w={11} $h={2} $c="#be9117" />
                <Stripe $t={70} $w={11} $h={2} $c="#8b8268" />
                <Stripe $t={74} $w={11} $h={4} $c="#8b8268" />
              </Editor>
              <EditorFooter />
            </EditorPane>
          </TopArea>
          <RunPanel>
            <RunHeader>
              <RunLabel>Run:</RunLabel>
              <RunTab>
                <Py s={15} dim />
                <span>timeseries_weather_forecasting</span>
                <CloseX $ml={3}><Close s={9} /></CloseX>
              </RunTab>
              <RunHeaderRight>
                <Gear s={13} />
                <Dash w={12} />
              </RunHeaderRight>
            </RunHeader>
            <RunBody>
              <ToolCol $w={29}>
                <Slot><Play w={12} h={15} /></Slot>
                <Slot><Square s={11} /></Slot>
                <ToolSep $mt={3} />
                <Slot $h={32}><LayoutIcon /></Slot>
                <ToolSep />
                <Slot $h={32}><Pin /></Slot>
              </ToolCol>
              <ToolCol $w={29}>
                <Slot><Arrow /></Slot>
                <Slot><Arrow down /></Slot>
                <Slot $mt={1}><Wrap /></Slot>
                <Slot><ScrollEnd /></Slot>
                <Slot><Printer /></Slot>
                <Slot><Trash /></Slot>
              </ToolCol>
              <Console>
                {LINES.map((l, i) => (l.rule
                  ? <RuleLine key={i}>{l.text}</RuleLine>
                  : <Line key={i} $err={l.err}>{l.text}</Line>))}
                {CONSOLE_BARS.map(([t, h]) => <VBar key={t} $t={t} $h={h} />)}
                <HBar />
              </Console>
            </RunBody>
          </RunPanel>
        </Main>
      </Middle>
      <BottomBar>
        <BottomTab><ListIcon /><span><u>6</u>: TODO</span></BottomTab>
        <BottomTab $active $pl={12} $pr={10}><Play w={8} h={11} c="#afb1b3" /><span><u>4</u>: Run</span></BottomTab>
        <BottomTab $pl={12}><Bug s={11} c="#afb1b3" /><span><u>5</u>: Debug</span></BottomTab>
        <BottomTab $pl={10} $pr={16}><TermIcon /><span>Terminal</span></BottomTab>
        <BottomTab $pl={10}><PyGray /><span>Python Console</span></BottomTab>
        <EventLog><Balloon /><span>Event Log</span></EventLog>
      </BottomBar>
      <StatusBar>
        <SquareOutline />
        <StatusRight>
          <span>97:1</span>
          <span>CRLF</span>
          <span>UTF-8</span>
          <span>4 spaces</span>
          <span>Python 3.6 (jjgtensorflowgpu)</span>
          <Lock />
          <Hector />
        </StatusRight>
      </StatusBar>
    </Root>
  );
}
